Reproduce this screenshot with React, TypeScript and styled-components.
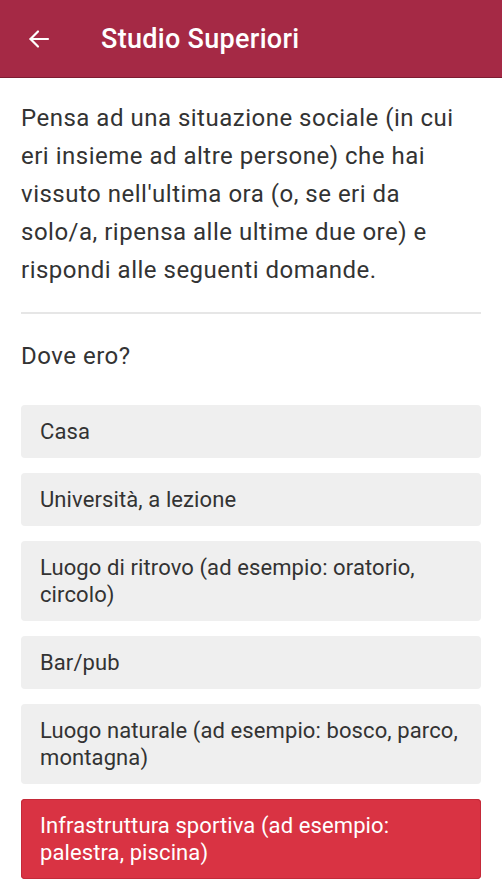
import React from "react";
import styled, { createGlobalStyle } from "styled-components";

const Global = createGlobalStyle`
  html, body { margin: 0; padding: 0; background: #ffffff; }
  body { font-family: Roboto, "Noto Sans", Arial, sans-serif; -webkit-font-smoothing: antialiased; }
  * { box-sizing: border-box; }
`;

const Page = styled.div`
  width: 502px;
  min-height: 893px;
  background: #ffffff;
  overflow: hidden;
`;

const Header = styled.header`
  height: 78px;
  background: #a52945;
  border-bottom: 1px solid #7d1c32;
  display: flex;
  align-items: center;
  padding-left: 26px;
`;

const BackButton = styled.button`
  width: 26px;
  height: 26px;
  padding: 0;
  border: none;
  background: transparent;
  color: #ffffff;
  display: flex;
  align-items: center;
  justify-content: center;
  margin-top: 1px;
`;

const Title = styled.h1`
  margin: 0 0 0 49px;
  font-family: Roboto, sans-serif;
  font-weight: 500;
  font-size: 27px;
  color: #ffffff;
  letter-spacing: 0.3px;
`;

const Content = styled.main`
  padding: 21px 21px 0 21px;
`;

const Intro = styled.p`
  margin: 0;
  font-size: 24px;
  line-height: 38px;
  color: #333333;
  letter-spacing: 0.5px;
`;

const Divider = styled.hr`
  margin: 23px 0 0 0;
  border: none;
  height: 2px;
  background: #e6e6e6;
`;

const Question = styled.h2`
  margin: 23px 0 0 0;
  font-weight: 400;
  font-size: 24px;
  line-height: 38px;
  color: #333333;
  letter-spacing: 0.5px;
`;

const Options = styled.div`
  margin-top: 30px;
  display: flex;
  flex-direction: column;
  gap: 15px;
`;

const Option = styled.button<{ $selected?: boolean }>`
  display: block;
  width: 100%;
  text-align: left;
  border: none;
  border-radius: 4px;
  padding: 13px 19px;
  font-family: Roboto, sans-serif;
  font-size: 22px;
  line-height: 27px;
  letter-spacing: 0.1px;
  color: ${(p) => (p.$selected ? "#ffffff" : "#333333")};
  background: ${(p) => (p.$selected ? "#d93343" : "#efefef")};
  box-shadow: ${(p) => (p.$selected ? "inset 0 0 0 1px #c42a39" : "none")};
`;

const options = [
  "Casa",
  "Università, a lezione",
  "Luogo di ritrovo (ad esempio: oratorio, circolo)",
  "Bar/pub",
  "Luogo naturale (ad esempio: bosco, parco, montagna)",
  "Infrastruttura sportiva (ad esempio: palestra, piscina)",
];

export default function App() {
  return (
    <Page>
      <Global />
      <Header>
        <BackButton aria-label="Indietro">
          <svg width="24" height="24" viewBox="0 0 24 24" fill="none" stroke="#fff" strokeWidth="2.2" strokeLinecap="round" strokeLinejoin="round">
            <path d="M21 12H3.5" />
            <path d="M11 4.5L3.5 12L11 19.5" />
          </svg>
        </BackButton>
        <Title>Studio Superiori</Title>
      </Header>
      <Content>
        <Intro>
          Pensa ad una situazione sociale (in cui eri insieme ad altre persone) che hai vissuto nell'ultima ora (o, se eri da solo/a, ripensa alle ultime due ore) e rispondi alle seguenti domande.
        </Intro>
        <Divider />
        <Question>Dove ero?</Question>
        <Options>
          {options.map((o, i) => (
            <Option key={o} $selected={i === 5}>
              {o}
            </Option>
          ))}
        </Options>
      </Content>
    </Page>
  );
}
